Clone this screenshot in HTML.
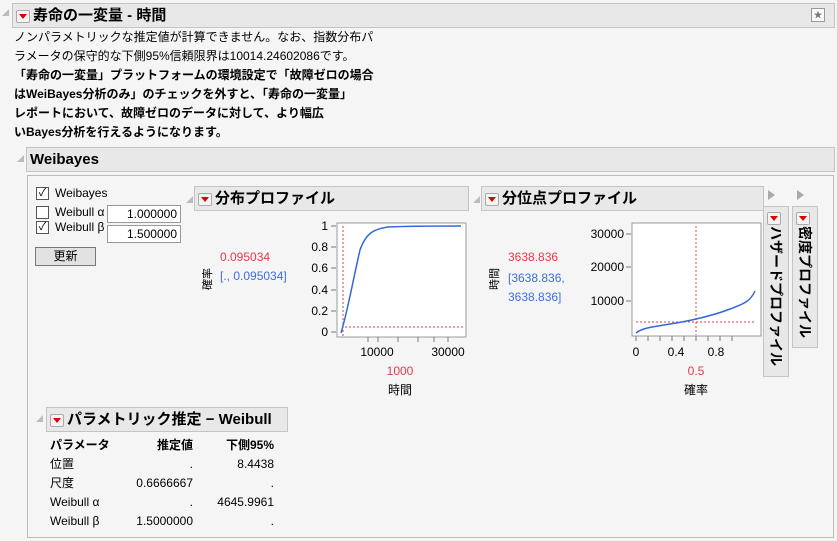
<!DOCTYPE html>
<html><head><meta charset="utf-8"><style>
body{margin:0;width:837px;height:541px;background:#f5f5f5;font-family:"Liberation Sans","Noto Sans CJK JP",sans-serif;position:relative;overflow:hidden;color:#000}
.a{position:absolute;white-space:nowrap}
.hdr{position:absolute;background:#e8e8e8;border:1px solid #c4c4c4;font-weight:bold}
.dd{display:inline-block;width:12px;height:11px;border:1px solid #aaa;background:#f4f4f4;border-radius:2px;position:relative;vertical-align:middle;margin-right:3px}
.dd:after{content:"";position:absolute;left:2px;top:3px;border-left:4px solid transparent;border-right:4px solid transparent;border-top:5px solid #d00}
.txt{font-size:12px;line-height:19px}
.red{color:#e8394a}.blue{color:#3b6fe0}
.cb{position:absolute;width:11px;height:11px;border:1px solid #555;background:#fff;font-size:11px;line-height:11px;text-align:center}
.inp{position:absolute;background:#fff;border:1px solid #999;font-size:12px;text-align:right;padding-right:3px;box-sizing:border-box;height:18px;line-height:16px}
.s{font-size:12px}
.vt{writing-mode:vertical-rl;text-orientation:sideways}
.vu{writing-mode:vertical-rl;text-orientation:sideways;transform:rotate(180deg)}
</style></head><body>
<div class="a" style="left:2px;top:9px;width:0;height:0;border-left:7px solid transparent;border-bottom:7px solid #bbb"></div>
<div class="hdr" style="left:12px;top:3px;width:818px;height:23px;font-size:15px;line-height:23px;padding-left:3px"><span class="dd"></span>寿命の一変量 - 時間</div>
<div class="a" style="left:811px;top:8px;width:12px;height:12px;border:1px solid #999;background:#fafafa;font-size:9px;text-align:center;line-height:12px;color:#777">★</div>
<div class="a txt" style="left:14px;top:28px">ノンパラメトリックな推定値が計算できません。なお、指数分布パ<br>ラメータの保守的な下側95%信頼限界は10014.24602086です。</div>
<div class="a txt" style="left:14px;top:66px;font-weight:bold">「寿命の一変量」プラットフォームの環境設定で「故障ゼロの場合<br>はWeiBayes分析のみ」のチェックを外すと、「寿命の一変量」<br>レポートにおいて、故障ゼロのデータに対して、より幅広<br>いBayes分析を行えるようになります。</div>
<div class="a" style="left:17px;top:155px;width:0;height:0;border-left:7px solid transparent;border-bottom:7px solid #bbb"></div>
<div class="hdr" style="left:26px;top:147px;width:804px;height:23px;font-size:15px;line-height:23px;padding-left:3px">Weibayes</div>
<div class="a" style="left:27px;top:175px;width:805px;height:361px;border:1px solid #bbb"></div>
<div class="cb" style="left:36px;top:187px">✓</div><div class="a s" style="left:55px;top:186px">Weibayes</div>
<div class="cb" style="left:36px;top:206px"></div><div class="a s" style="left:55px;top:205px">Weibull α</div>
<div class="cb" style="left:36px;top:221px">✓</div><div class="a s" style="left:55px;top:220px">Weibull β</div>
<div class="inp" style="left:107px;top:205px;width:74px">1.000000</div>
<div class="inp" style="left:107px;top:225px;width:74px">1.500000</div>
<div class="a s" style="left:35px;top:247px;width:59px;height:17px;border:1px solid #777;background:#e2e2e2;text-align:center;line-height:17px">更新</div>
<div class="a" style="left:186px;top:196px;width:0;height:0;border-left:7px solid transparent;border-bottom:7px solid #bbb"></div>
<div class="hdr" style="left:194px;top:186px;width:270px;height:23px;font-size:15px;line-height:23px;padding-left:3px"><span class="dd"></span>分布プロファイル</div>
<div class="a" style="left:473px;top:196px;width:0;height:0;border-left:7px solid transparent;border-bottom:7px solid #bbb"></div>
<div class="hdr" style="left:481px;top:186px;width:278px;height:23px;font-size:15px;line-height:23px;padding-left:3px"><span class="dd"></span>分位点プロファイル</div>
<div class="a s red" style="left:220px;top:250px">0.095034</div>
<div class="a s blue" style="left:220px;top:269px">[., 0.095034]</div>
<div class="a vu" style="left:199px;top:268px;font-size:11px">確率</div>
<svg class="a" style="left:300px;top:215px" width="180" height="185" font-family="Liberation Sans" font-size="12">
<rect x="37" y="8" width="129" height="114" fill="#fff" stroke="#999"/>
<g text-anchor="end"><text x="28" y="15">1</text><text x="28" y="36">0.8</text><text x="28" y="57">0.6</text><text x="28" y="79">0.4</text><text x="28" y="100">0.2</text><text x="28" y="121">0</text></g>
<path d="M31 11h5M31 32h5M31 53h5M31 75h5M31 96h5M31 117h5M68 122v5M78 122v5M98 122v5M118 122v5M134 122v5M148 122v5" stroke="#777"/>
<text x="77" y="141" text-anchor="middle">10000</text><text x="148" y="141" text-anchor="middle">30000</text>
<text x="100" y="160" text-anchor="middle" fill="#e8394a">1000</text>
<text x="100" y="179" text-anchor="middle">時間</text>
<path d="M43 11V121M45 112H165" stroke="#e8394a" stroke-dasharray="2,2"/>
<path d="M41 118C48 95 54 60 60 35C66 18 74 14 88 12C110 11 140 11 161 11" stroke="#3366dd" stroke-width="1.5" fill="none"/>
</svg>
<div class="a s red" style="left:508px;top:250px">3638.836</div>
<div class="a s blue" style="left:508px;top:269px;line-height:19px">[3638.836,<br>3638.836]</div>
<div class="a vu" style="left:486px;top:268px;font-size:11px">時間</div>
<svg class="a" style="left:580px;top:215px" width="190" height="185" font-family="Liberation Sans" font-size="12">
<rect x="52" y="8" width="129" height="113" fill="#fff" stroke="#999"/>
<g text-anchor="end"><text x="44" y="23">30000</text><text x="44" y="56">20000</text><text x="44" y="90">10000</text></g>
<path d="M46 19h5M46 52h5M46 86h5M56 121v5M68 121v5M80 121v5M92 121v5M104 121v5M116 121v5M128 121v5M140 121v5M152 121v5" stroke="#777"/>
<text x="56" y="141" text-anchor="middle">0</text><text x="96" y="141" text-anchor="middle">0.4</text><text x="136" y="141" text-anchor="middle">0.8</text>
<text x="116" y="160" text-anchor="middle" fill="#e8394a">0.5</text>
<text x="116" y="179" text-anchor="middle">確率</text>
<path d="M116 11V120M56 107H176" stroke="#e8394a" stroke-dasharray="2,2"/>
<path d="M56 118C62 113 72 112 90 109C110 106 135 100 150 94C163 89 170 87 175 76" stroke="#3366dd" stroke-width="1.5" fill="none"/>
</svg>
<div class="a" style="left:768px;top:190px;border-top:5px solid transparent;border-bottom:5px solid transparent;border-left:7px solid #aaa"></div>
<div class="a" style="left:797px;top:190px;border-top:5px solid transparent;border-bottom:5px solid transparent;border-left:7px solid #aaa"></div>
<div class="hdr vt" style="left:763px;top:206px;width:24px;height:150px;font-size:14px;line-height:24px;padding-top:19px;overflow:hidden">ハザードプロファイル</div>
<div class="a" style="left:767px;top:210px"><span class="dd"></span></div>
<div class="hdr vt" style="left:792px;top:206px;width:24px;height:121px;font-size:14px;line-height:24px;padding-top:19px;overflow:hidden">密度プロファイル</div>
<div class="a" style="left:796px;top:210px"><span class="dd"></span></div>
<div class="a" style="left:36px;top:415px;width:0;height:0;border-left:7px solid transparent;border-bottom:7px solid #bbb"></div>
<div class="hdr" style="left:46px;top:407px;width:237px;height:23px;font-size:15px;line-height:23px;padding-left:3px"><span class="dd"></span>パラメトリック推定 − Weibull</div>
<div class="a s" style="left:50px;top:436px;line-height:19px;font-weight:bold">パラメータ</div>
<div class="a s" style="left:50px;top:455px;line-height:19px">位置<br>尺度<br>Weibull α<br>Weibull β</div>
<div class="a s" style="left:120px;top:436px;width:73px;text-align:right;line-height:19px"><b>推定値</b><br>.<br>0.6666667<br>.<br>1.5000000</div>
<div class="a s" style="left:200px;top:436px;width:74px;text-align:right;line-height:19px"><b>下側95%</b><br>8.4438<br>.<br>4645.9961<br>.</div>
</body></html>
